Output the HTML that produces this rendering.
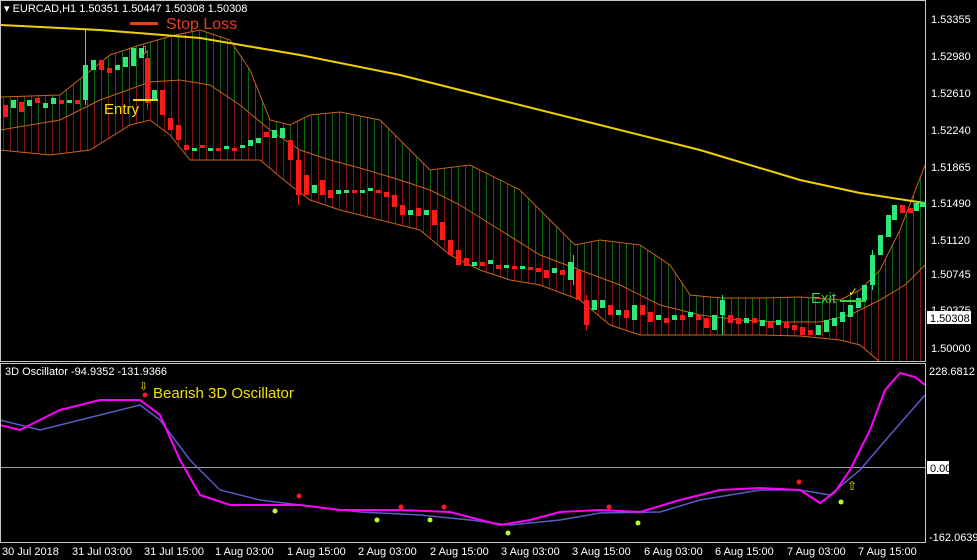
<!DOCTYPE html>
<html><head><meta charset="utf-8"><style>
body{margin:0;background:#000;width:977px;height:560px;overflow:hidden;font-family:"Liberation Sans",sans-serif}
svg{display:block}
text{font-family:"Liberation Sans",sans-serif}
</style></head><body>
<svg width="977" height="560" xmlns="http://www.w3.org/2000/svg">
<defs>
<pattern id="pg" width="7" height="10" patternUnits="userSpaceOnUse"><rect x="3" width="1" height="10" fill="#0b6a0b"/></pattern>
<pattern id="pr" width="7" height="10" patternUnits="userSpaceOnUse"><rect x="3" width="1" height="10" fill="#801410"/></pattern>
<clipPath id="c1"><rect x="1" y="1" width="924" height="360"/></clipPath>
<clipPath id="c2"><rect x="1" y="364" width="924" height="178"/></clipPath>
</defs>
<g clip-path="url(#c1)">
<polygon fill="url(#pg)" points="0,97 60,95 85,75 110,55 140,45 175,35 200,30 230,40 250,70 270,120 290,125 310,115 340,112 380,120 400,140 430,170 470,165 520,190 550,220 575,245 600,240 640,245 670,265 690,295 720,298 760,298 800,297 840,300 860,290 880,270 900,230 925,165 925,265 905,285 880,300 850,315 820,322 780,322 740,320 700,315 660,305 620,285 580,270 540,255 500,230 460,205 430,190 400,180 360,168 330,160 300,150 270,130 240,105 210,85 180,80 150,82 100,100 60,120 0,130"/>
<polygon fill="url(#pr)" points="0,130 60,120 100,100 150,82 180,80 210,85 240,105 270,130 300,150 330,160 360,168 400,180 430,190 460,205 500,230 540,255 580,270 620,285 660,305 700,315 740,320 780,322 820,322 850,315 880,300 905,285 925,265 925,362 880,362 860,345 840,340 800,336 760,335 720,335 680,335 640,335 610,325 580,300 540,285 510,280 480,270 450,255 420,230 380,220 340,210 310,200 290,185 260,160 220,160 190,160 170,135 150,120 130,125 90,150 50,155 0,150"/>
<polyline fill="none" stroke="#c8641e" points="0,97 60,95 85,75 110,55 140,45 175,35 200,30 230,40 250,70 270,120 290,125 310,115 340,112 380,120 400,140 430,170 470,165 520,190 550,220 575,245 600,240 640,245 670,265 690,295 720,298 760,298 800,297 840,300 860,290 880,270 900,230 925,165"/>
<polyline fill="none" stroke="#c8641e" points="0,130 60,120 100,100 150,82 180,80 210,85 240,105 270,130 300,150 330,160 360,168 400,180 430,190 460,205 500,230 540,255 580,270 620,285 660,305 700,315 740,320 780,322 820,322 850,315 880,300 905,285 925,265"/>
<polyline fill="none" stroke="#c8641e" points="0,150 50,155 90,150 130,125 150,120 170,135 190,160 220,160 260,160 290,185 310,200 340,210 380,220 420,230 450,255 480,270 510,280 540,285 580,300 610,325 640,335 680,335 720,335 760,335 800,336 840,340 860,345 880,362"/>
<polyline fill="none" stroke="#f2d000" stroke-width="2" points="0,25 100,30 200,38 300,55 400,75 500,100 600,125 700,150 800,180 860,193 925,203"/>
<path fill="#ff1a1a" d="M3 105h5v12h-5z M19 102h5v10h-5z M35 98h5v5h-5z M59 100h5v4h-5z M75 100h5v4h-5z M99 60h5v10h-5z M107 68h5v5h-5z M145 58h5v45h-5z M160 90h5v25h-5z M168 118h5v12h-5z M176 125h5v15h-5z M184 145h5v5h-5z M200 145h5v3h-5z M216 148h5v3h-5z M232 148h5v3h-5z M264 132h5v5h-5z M288 140h5v20h-5z M296 160h5v35h-5z M304 175h5v20h-5z M320 180h5v15h-5z M328 190h5v8h-5z M352 190h5v3h-5z M376 190h5v3h-5z M384 192h5v5h-5z M392 195h5v12h-5z M400 205h5v10h-5z M416 208h5v8h-5z M432 210h5v15h-5z M440 222h5v18h-5z M448 240h5v15h-5z M456 250h5v15h-5z M464 258h5v8h-5z M480 262h5v4h-5z M496 265h5v4h-5z M512 266h5v3h-5z M528 267h5v3h-5z M536 268h5v4h-5z M544 270h5v8h-5z M560 270h5v5h-5z M576 270h5v30h-5z M584 300h5v25h-5z M608 305h5v10h-5z M624 310h5v8h-5z M640 305h5v10h-5z M648 312h5v10h-5z M664 318h5v5h-5z M680 315h5v5h-5z M696 315h5v5h-5z M704 318h5v10h-5z M728 315h5v8h-5z M736 318h5v6h-5z M752 318h5v5h-5z M768 322h5v6h-5z M784 322h5v6h-5z M792 325h5v5h-5z M800 327h5v8h-5z M808 330h5v5h-5z M900 205h5v8h-5z M908 208h5v5h-5z"/>
<path fill="#2ee87a" d="M11 100h5v8h-5z M27 100h5v6h-5z M43 103h5v5h-5z M51 98h5v6h-5z M67 100h5v3h-5z M83 65h5v35h-5z M91 60h5v10h-5z M115 65h5v5h-5z M123 57h5v10h-5z M131 48h5v18h-5z M139 48h5v10h-5z M152 90h5v10h-5z M192 148h5v3h-5z M208 148h5v3h-5z M224 146h5v3h-5z M240 145h5v3h-5z M248 140h5v6h-5z M256 138h5v5h-5z M272 130h5v8h-5z M280 128h5v10h-5z M312 185h5v8h-5z M336 190h5v4h-5z M344 190h5v3h-5z M360 190h5v3h-5z M368 188h5v3h-5z M408 210h5v5h-5z M424 210h5v5h-5z M472 262h5v4h-5z M488 260h5v4h-5z M504 265h5v3h-5z M520 266h5v3h-5z M552 268h5v5h-5z M568 262h5v18h-5z M592 300h5v10h-5z M600 300h5v8h-5z M616 310h5v5h-5z M632 305h5v15h-5z M656 315h5v5h-5z M672 315h5v5h-5z M688 312h5v5h-5z M712 315h5v15h-5z M720 300h5v15h-5z M744 318h5v5h-5z M760 320h5v6h-5z M776 320h5v5h-5z M816 325h5v10h-5z M824 320h5v12h-5z M832 318h5v8h-5z M840 312h5v10h-5z M848 305h5v12h-5z M856 298h5v10h-5z M862 285h5v15h-5z M870 255h5v30h-5z M878 235h5v20h-5z M886 215h5v22h-5z M892 205h5v15h-5z M914 203h5v8h-5z M920 202h5v5h-5z"/>
<path stroke="#2ee87a" d="M85.5 30v75 M573.5 255v30 M722.5 295v40 M872.5 250v40" fill="none"/>
<path stroke="#ff1a1a" d="M147.5 50v60 M298.5 150v55 M586.5 295v35" fill="none"/>
<rect x="130" y="22" width="28" height="3" fill="#e8401c"/>
<text x="166" y="29" font-size="16" fill="#e8401c">Stop Loss</text>
<rect x="133" y="99" width="25" height="2" fill="#f2e000"/>
<text x="104" y="114" font-size="15" fill="#f2e000">Entry</text>
<text x="140" y="54" font-size="11" fill="#f2e000">⇩</text>
<text x="811" y="303" font-size="15" fill="#3ed43e">Exit</text>
<rect x="840" y="300" width="26" height="2" fill="#3ed43e"/>
<text x="848" y="296" font-size="12" fill="#f2e000">✓</text>
</g>
<rect x="0.5" y="0.5" width="925" height="361" fill="none" stroke="#c8c8c8"/>
<rect x="0.5" y="363.5" width="925" height="179" fill="none" stroke="#c8c8c8"/>
<line x1="1" y1="467.5" x2="925" y2="467.5" stroke="#a0a0a0"/>
<g clip-path="url(#c2)">
<polyline fill="none" stroke="#5a5ac8" stroke-width="1.5" points="0,420 40,430 100,415 140,405 160,420 190,460 220,490 260,500 300,505 360,512 420,515 470,520 510,525 560,520 600,513 660,512 700,500 760,490 800,490 830,495 860,470 890,435 925,395"/>
<polyline fill="none" stroke="#ff00ff" stroke-width="2" points="0,425 20,430 60,410 100,400 140,400 160,415 180,460 200,495 230,505 260,505 300,505 340,510 400,510 450,512 500,525 530,520 560,512 600,510 640,512 680,500 720,490 760,488 800,490 820,503 835,492 850,470 870,430 885,390 900,373 915,377 925,385"/>
<g fill="#ff1a1a"><circle cx="145" cy="395" r="2.5"/><circle cx="299" cy="496" r="2.5"/><circle cx="401" cy="507" r="2.5"/><circle cx="444" cy="507" r="2.5"/><circle cx="609" cy="507" r="2.5"/><circle cx="799" cy="482" r="2.5"/></g>
<g fill="#b4ff28"><circle cx="275" cy="511" r="2.5"/><circle cx="377" cy="520" r="2.5"/><circle cx="430" cy="520" r="2.5"/><circle cx="508" cy="533" r="2.5"/><circle cx="638" cy="523" r="2.5"/><circle cx="841" cy="502" r="2.5"/></g>
<text x="139" y="390" font-size="11" fill="#f2e000">⇩</text>
<text x="847" y="490" font-size="12" fill="#f2e000">⇧</text>
<text x="153" y="398" font-size="15" fill="#f2e000">Bearish 3D Oscillator</text>
</g>
<rect x="1" y="1" width="250" height="14" fill="#000"/>
<text x="4" y="12" font-size="11" fill="#fff">▾ EURCAD,H1  1.50351 1.50447 1.50308 1.50308</text>
<text x="5" y="375" font-size="11" fill="#fff">3D Oscillator -94.9352 -131.9366</text>
<g font-size="11" fill="#fff">
<text x="931" y="23">1.53355</text><text x="931" y="60">1.52980</text><text x="931" y="97">1.52610</text>
<text x="931" y="134">1.52240</text><text x="931" y="171">1.51865</text><text x="931" y="207">1.51490</text>
<text x="931" y="244">1.51120</text><text x="931" y="278">1.50745</text><text x="931" y="314">1.50375</text>
<text x="931" y="352">1.50000</text>
<text x="929" y="375">228.6812</text><text x="929" y="541">-162.0639</text>
</g>
<rect x="927" y="311" width="44" height="13" fill="#fff"/><text x="930" y="322" font-size="11" fill="#000">1.50308</text>
<rect x="927" y="461" width="22" height="13" fill="#fff"/><text x="930" y="472" font-size="11" fill="#000">0.00</text>
<g font-size="11" fill="#fff">
<text x="2" y="555">30 Jul 2018</text><text x="72" y="555">31 Jul 03:00</text><text x="144" y="555">31 Jul 15:00</text>
<text x="215" y="555">1 Aug 03:00</text><text x="287" y="555">1 Aug 15:00</text><text x="358" y="555">2 Aug 03:00</text>
<text x="430" y="555">2 Aug 15:00</text><text x="501" y="555">3 Aug 03:00</text><text x="572" y="555">3 Aug 15:00</text>
<text x="644" y="555">6 Aug 03:00</text><text x="715" y="555">6 Aug 15:00</text><text x="787" y="555">7 Aug 03:00</text>
<text x="858" y="555">7 Aug 15:00</text>
</g>
</svg>
</body></html>
